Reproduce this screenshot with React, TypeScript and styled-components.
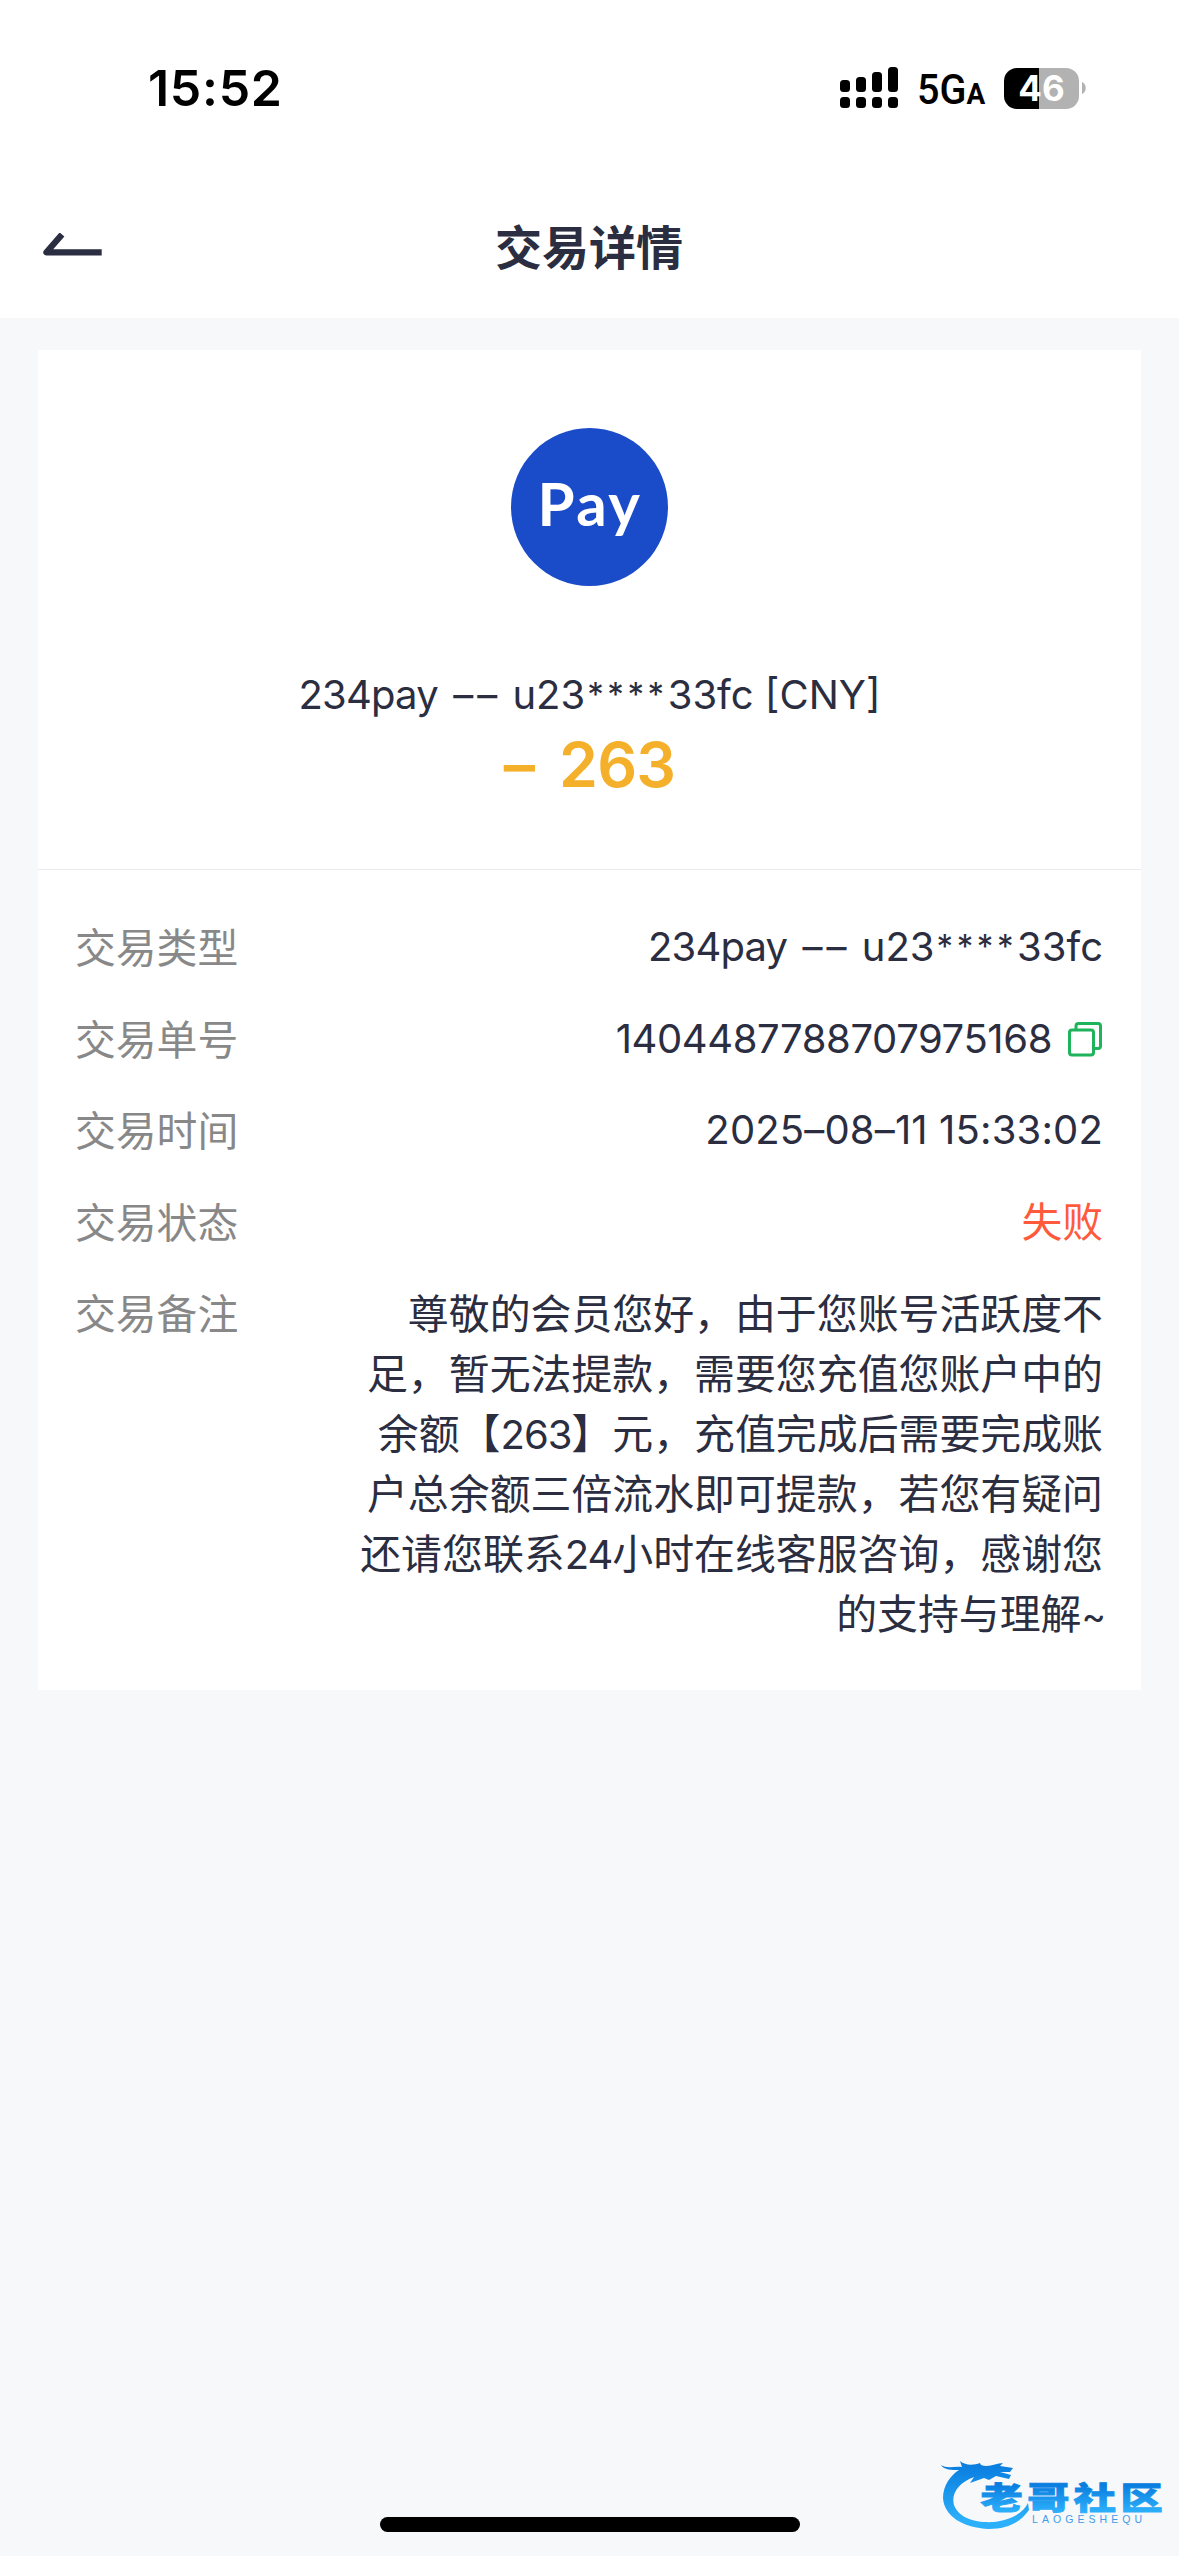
import React from "react";
import styled, { createGlobalStyle } from "styled-components";

const GlobalStyle = createGlobalStyle`
  * { box-sizing: border-box; }
  body { margin: 0; background: #f7f8fa; }
`;

const Screen = styled.div`
  position: relative;
  width: 1179px;
  height: 2556px;
  overflow: hidden;
  display: flex;
  flex-direction: column;
  background: #f7f8fa;
  color: #2b2d40;
  font-family: Inter, "Noto Sans CJK SC", sans-serif;
`;

const StatusBar = styled.div`
  height: 177px;
  padding: 0 93px 0 148px;
  display: flex;
  justify-content: space-between;
  background: #fff;
  color: #000;
`;

const Clock = styled.div`
  height: 176px;
  line-height: 176px;
  font-size: 50px;
  font-weight: 600;
  letter-spacing: 0.7px;
`;

const StatusIcons = styled.div`
  height: 176px;
  display: flex;
  align-items: center;
`;

const Network = styled.div`
  width: 85px;
  padding: 7px 0 0 19px;
  line-height: 50px;
  font-family: Roboto, sans-serif;
  font-size: 42.5px;
  font-weight: 500;
  white-space: nowrap;
  transform: scaleX(0.93);
  transform-origin: 19px 50%;
  small { font-size: 30px; font-weight: 700; }
`;

const Battery = styled.div`
  margin-left: 21px;
  width: 75px;
  height: 41px;
  border-radius: 13px;
  background: linear-gradient(90deg, #000 35px, #b2b2b2 35px);
  color: #fff;
  line-height: 41px;
  text-align: center;
  font-size: 35px;
  font-weight: 700;
`;

const NavBar = styled.header`
  height: 141px;
  padding: 0 42px 5px;
  display: grid;
  grid-template-columns: 200px 1fr 200px;
  align-items: center;
  background: #fff;
`;

const Title = styled.h1`
  margin: 0 1px 0 0;
  text-align: center;
  line-height: 60px;
  font-family: "Noto Sans CJK SC", sans-serif;
  font-size: 47px;
  font-weight: 700;
`;

const Card = styled.main`
  margin: 32px 38px 0;
  height: 1340px;
  background: #fff;
`;

const Summary = styled.section`
  height: 520px;
  padding-top: 78px;
  display: flex;
  flex-direction: column;
  align-items: center;
  border-bottom: 1px solid #ebebee;
`;

const Logo = styled.div`
  width: 157px;
  height: 158px;
  border-radius: 50%;
  background: #1a4bc8;
  color: #fff;
  text-align: center;
  line-height: 151px;
  font-family: Lato, sans-serif;
  font-size: 60px;
  font-weight: 700;
  letter-spacing: 2.5px;
  text-indent: 1px;
`;

const Account = styled.div`
  margin-top: 79px;
  height: 60px;
  line-height: 60px;
  font-size: 40px;
  white-space: pre;
`;

const Amount = styled.div`
  margin-top: 1px;
  line-height: 76px;
  font-size: 62.5px;
  font-weight: 600;
  letter-spacing: -0.8px;
  word-spacing: 10px;
  color: #f5b02b;
  white-space: pre;
`;

const Details = styled.section`
  padding: 47px 38px 0 37px;
  display: flex;
  flex-direction: column;
  gap: 31.5px;
`;

const Row = styled.div`
  display: flex;
  justify-content: space-between;
`;

const Label = styled.div`
  height: 60px;
  line-height: 57px;
  font-family: "Noto Sans CJK SC", sans-serif;
  font-size: 40.8px;
  color: #888;
`;

const Value = styled.div<{ $tone?: string; $size?: number; $spacing?: number }>`
  height: 60px;
  display: flex;
  align-items: center;
  line-height: 62px;
  font-size: ${(p) => p.$size ?? 40}px;
  letter-spacing: ${(p) => p.$spacing ?? 0}px;
  color: ${(p) => p.$tone ?? "inherit"};
  white-space: pre;
`;

const Tight = styled.span`
  letter-spacing: -0.8px;
`;

const Dashes = styled.span`
  margin-left: 4px;
  letter-spacing: 4px;
`;

const Mask = styled.span`
  margin: 0 0 0 2px;
  font-size: 33px;
  line-height: 0;
  letter-spacing: 3.6px;
  vertical-align: 3px;
`;

const Remark = styled.div`
  padding-top: 1px;
  font-size: 40.9px;
  text-align: right;
  white-space: nowrap;
`;

const RemarkLine = styled.div`
  height: 60px;
  line-height: 60px;
`;

const Digits = styled.span`
  font-size: 40px;
  line-height: 0;
  letter-spacing: -1px;
`;

const Tilde = styled.span`
  margin-right: -2px;
  font-size: 37px;
  line-height: 0;
  letter-spacing: -1px;
`;

const CopyIcon = styled.svg`
  margin-left: 15px;
`;

const HomeIndicator = styled.div`
  position: absolute;
  left: 380px;
  bottom: 24px;
  width: 420px;
  height: 15px;
  border-radius: 8px;
  background: #000;
`;

const Watermark = styled.svg`
  position: absolute;
  right: 0;
  bottom: 0;
`;

const remarkLines = [
  "尊敬的会员您好，由于您账号活跃度不",
  "足，暂无法提款，需要您充值您账户中的",
  "余额【263】元，充值完成后需要完成账",
  "户总余额三倍流水即可提款，若您有疑问",
  "还请您联系24小时在线客服咨询，感谢您",
  "的支持与理解~",
];

const signalTops = [40, 37, 32, 27];

function MixedLine({ text }: { text: string }) {
  return (
    <RemarkLine>
      {text.split(/(\d+|~)/).map((part, i) => {
        if (part === "~") return <Tilde key={i}>{part}</Tilde>;
        return i % 2 ? <Digits key={i}>{part}</Digits> : part;
      })}
    </RemarkLine>
  );
}

function Payee() {
  return (
    <span>
      <Tight>234pay</Tight> <Dashes>––</Dashes> u23<Mask>****</Mask>33fc
    </span>
  );
}

export default function App() {
  return (
    <Screen>
      <GlobalStyle />
      <StatusBar>
        <Clock>15:52</Clock>
        <StatusIcons>
          <svg width="58" height="96" viewBox="0 0 58 96">
            {signalTops.map((top, i) => (
              <React.Fragment key={top}>
                <rect x={i * 16} y={top} width="10" height={52 - top} rx="3.5" />
                <rect x={i * 16} y="57" width="10" height="11" rx="3.5" />
              </React.Fragment>
            ))}
          </svg>
          <Network>5G<small>A</small></Network>
          <Battery>46</Battery>
          <svg width="7" height="14" viewBox="0 0 7 14">
            <path d="M3 1C8 3 8 11 3 13Z" fill="#b2b2b2" />
          </svg>
        </StatusIcons>
      </StatusBar>
      <NavBar>
        <svg width="62" height="24" viewBox="0 0 62 24">
          <path d="M20 1.5L4.5 19.3H59.7" fill="none" stroke="#2b2d40" strokeWidth="6.3" strokeLinejoin="round" />
        </svg>
        <Title>交易详情</Title>
      </NavBar>
      <Card>
        <Summary>
          <Logo>Pay</Logo>
          <Account><Payee /> [CNY]</Account>
          <Amount>– 263</Amount>
        </Summary>
        <Details>
          <Row><Label>交易类型</Label><Value><Payee /></Value></Row>
          <Row>
            <Label>交易单号</Label>
            <Value $spacing={-0.4}>
              1404487788707975168
              <CopyIcon width="36" height="36" viewBox="0 0 36 36" fill="none" stroke="#1fb35b" strokeWidth="3">
                <rect x="2.5" y="9" width="24" height="25" rx="2.5" />
                <path d="M9 9V5Q9 2.5 11.5 2.5H31Q33.5 2.5 33.5 5V25Q33.5 27.5 31 27.5H26.5" />
              </CopyIcon>
            </Value>
          </Row>
          <Row><Label>交易时间</Label><Value $spacing={0.15}>2025–08–11 15:33:02</Value></Row>
          <Row><Label>交易状态</Label><Value $tone="#ff5a3c" $size={40.8}>失败</Value></Row>
          <Row>
            <Label>交易备注</Label>
            <Remark>{remarkLines.map((line) => <MixedLine key={line} text={line} />)}</Remark>
          </Row>
        </Details>
      </Card>
      <HomeIndicator />
      <Watermark width="259" height="116" viewBox="0 0 259 116">
        <defs>
          <linearGradient id="wm" x1="0" y1="20" x2="0" y2="88" gradientUnits="userSpaceOnUse">
            <stop offset="0.1" stopColor="#0b7fe0" />
            <stop offset="0.9" stopColor="#2cb0fb" />
          </linearGradient>
          <linearGradient id="wt" x1="0" y1="43" x2="0" y2="72" gradientUnits="userSpaceOnUse">
            <stop offset="0.1" stopColor="#0b7fe0" />
            <stop offset="1" stopColor="#2cb0fb" />
          </linearGradient>
        </defs>
        <path
          fill="url(#wm)"
          d="M21 25C27 29 34 26 42 27L40 21C46 26 54 25 60 23L61 25C69 28 76 23 83 23L80 26L93 28L90 32L80 32L91 35L89 39L76 36L69 40L64 38L50 43L54 37C38 43 31 54 34 65C39 79 57 83 74 82C92 80 104 72 108 63L109 70C99 84 86 89 69 89C43 88 24 76 23 58C23 45 31 35 39 30C32 30 24 30 21 25Z"
        />
        <text transform="translate(60.5 0) scale(1.36 1)" x="0" y="69.3" letterSpacing="3.3" fill="url(#wt)" stroke="url(#wt)" strokeWidth="0.9" fontFamily="Noto Sans CJK SC" fontSize="31" fontWeight="900">老哥社区</text>
        <text x="112" y="82.5" textLength="110" fill="#3f9de8" fontFamily="Liberation Sans" fontSize="10.5">LAOGESHEQU</text>
      </Watermark>
    </Screen>
  );
}
